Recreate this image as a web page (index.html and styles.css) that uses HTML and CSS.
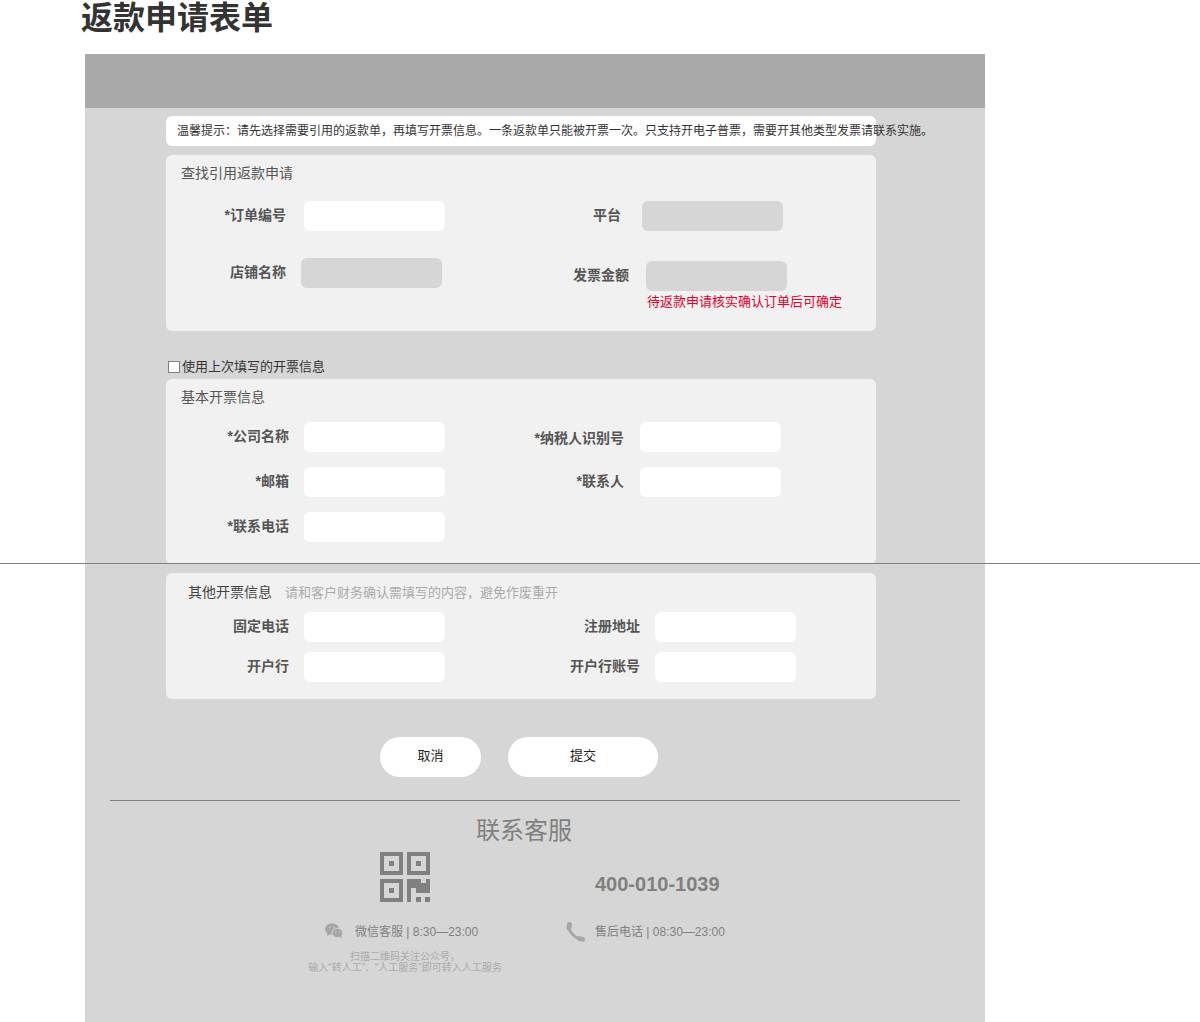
FILE: index.html
```html
<!DOCTYPE html>
<html lang="zh-CN">
<head>
    <meta charset="utf-8">
    <title>返款申请表单</title>
    <link rel="stylesheet" href="styles.css">
</head>
<body>
    <h1 class="page-title">返款申请表单</h1>
    <div class="page-rule"></div>

    <div class="panel">
        <div class="panel-header"></div>

        <div class="panel-body">
            <div class="notice">温馨提示：请先选择需要引用的返款单，再填写开票信息。一条返款单只能被开票一次。只支持开电子普票，需要开其他类型发票请联系实施。</div>

            <!-- Lookup -->
            <section class="card card-lookup">
                <h3 class="card-title">查找引用返款申请</h3>
                <div class="row row-lookup-a">
                    <div class="field">
                        <label class="label w120">*订单编号</label>
                        <input class="input gap18" type="text">
                    </div>
                    <div class="field">
                        <label class="label w100">平台</label>
                        <input class="input gap21" type="text" disabled>
                    </div>
                </div>
                <div class="row row-lookup-b">
                    <div class="field">
                        <label class="label w120">店铺名称</label>
                        <input class="input gap15" type="text" disabled>
                    </div>
                    <div class="field field-low">
                        <label class="label w108">发票金额</label>
                        <div class="gap17">
                            <input class="input" type="text" disabled>
                            <p class="hint">待返款申请核实确认订单后可确定</p>
                        </div>
                    </div>
                </div>
            </section>

            <label class="reuse"><input class="check" type="checkbox">使用上次填写的开票信息</label>

            <!-- Basic invoice info -->
            <section class="card card-basic">
                <h3 class="card-title">基本开票信息</h3>
                <div class="rows rows-basic">
                    <div class="row">
                        <div class="field">
                            <label class="label w123">*公司名称</label>
                            <input class="input gap15" type="text">
                        </div>
                        <div class="field">
                            <label class="label w103 label-low">*纳税人识别号</label>
                            <input class="input gap16" type="text">
                        </div>
                    </div>
                    <div class="row">
                        <div class="field">
                            <label class="label w123">*邮箱</label>
                            <input class="input gap15" type="text">
                        </div>
                        <div class="field">
                            <label class="label w103">*联系人</label>
                            <input class="input gap16" type="text">
                        </div>
                    </div>
                    <div class="row">
                        <div class="field">
                            <label class="label w123">*联系电话</label>
                            <input class="input gap15" type="text">
                        </div>
                    </div>
                </div>
            </section>

            <!-- Other invoice info -->
            <section class="card card-other">
                <h3 class="card-title card-title-other">其他开票信息<span class="card-tip">请和客户财务确认需填写的内容，避免作废重开</span></h3>
                <div class="rows rows-other">
                    <div class="row">
                        <div class="field">
                            <label class="label w123">固定电话</label>
                            <input class="input gap15" type="text">
                        </div>
                        <div class="field">
                            <label class="label w119">注册地址</label>
                            <input class="input gap15" type="text">
                        </div>
                    </div>
                    <div class="row">
                        <div class="field">
                            <label class="label w123">开户行</label>
                            <input class="input gap15" type="text">
                        </div>
                        <div class="field">
                            <label class="label w119">开户行账号</label>
                            <input class="input gap15" type="text">
                        </div>
                    </div>
                </div>
            </section>
        </div>

        <div class="actions">
            <button class="btn btn-cancel" type="button">取消</button>
            <button class="btn btn-submit" type="button">提交</button>
        </div>

        <div class="contact">
            <h2 class="contact-title">联系客服</h2>
            <div class="contact-cols">
                <div class="contact-wechat">
                    <svg class="qr" viewBox="0 0 50 50" width="50" height="50">
                        <path fill="#808080" fill-rule="evenodd" d="M0 0h23v23H0zM4 4v15h15V4zM9 9h5v5H9zM27 0h23v23H27zM31 4v15h15V4zM36 9h5v5h-5zM0 27h23v23H0zM4 31v15h15V31zM9 36h5v5H9z"/>
                        <path fill="#808080" d="M27 27h14v4h5v-4h4v14H36v-5h-5v14h-4zM36 45h5v5h-5zM45 45h5v5h-5z"/>
                    </svg>
                    <div class="contact-line wechat-line">
                        <svg class="icon-wechat" viewBox="0 0 18 16" width="18" height="16">
                            <ellipse cx="7" cy="6" rx="7" ry="5.800" fill="#a6a6a6"/>
                            <path d="M2.500 9.500L2 13l3.500-2z" fill="#a6a6a6"/>
                            <ellipse cx="12.500" cy="10" rx="5.500" ry="4.700" fill="#a6a6a6" stroke="#d6d6d6"/>
                            <path d="M15 13.500l1.500 2.500-.2-3.500z" fill="#a6a6a6"/>
                            <circle cx="4.800" cy="4.500" r="1" fill="#c4c4c4"/>
                            <circle cx="9" cy="4.500" r="1" fill="#c4c4c4"/>
                            <circle cx="10.500" cy="9" r=".8" fill="#c4c4c4"/>
                            <circle cx="14.500" cy="9" r=".8" fill="#c4c4c4"/>
                        </svg>
                        <span>微信客服 | 8:30—23:00</span>
                    </div>
                    <p class="contact-small">扫描二维码关注公众号，<br>输入“转人工”、“人工服务”即可转入人工服务</p>
                </div>
                <div class="contact-phone">
                    <div class="phone-number">400-010-1039</div>
                    <div class="contact-line phone-line">
                        <svg class="icon-phone" viewBox="0 0 20 20" width="20" height="20" fill="none" stroke="#a6a6a6" stroke-linecap="round">
                            <path d="M3.500 2.500L3 6" stroke-width="5"/>
                            <path d="M3 6C4 11 9 15.500 13 16.500" stroke-width="3"/>
                            <path d="M13 16.500L17 17.500" stroke-width="4.500"/>
                        </svg>
                        <span>售后电话 | 08:30—23:00</span>
                    </div>
                </div>
            </div>
        </div>
    </div>
</body>
</html>
```

FILE: styles.css
```css
* {
    box-sizing: border-box;
}

html, body {
    height: 1022px;
    overflow: hidden;
}

body {
    position: relative;
    margin: 0;
    background-color: #ffffff;
    font-family: "Liberation Sans", "Noto Sans CJK SC", sans-serif;
    color: #333333;
}

.page-title {
    height: 54px;
    margin: 0;
    padding-left: 81px;
    font-size: 32px;
    line-height: 37px;
    font-weight: bold;
    color: #333333;
}

/* stray rule that crosses the whole page */
.page-rule {
    position: absolute;
    top: 563px;
    left: 0;
    right: 0;
    height: 1px;
    background-color: #808080;
}

.panel {
    width: 900px;
    height: 968px;
    margin-left: 85px;
    background-color: #d6d6d6;
}

.panel-header {
    height: 54px;
    background-color: #a9a9a9;
}

.panel-body {
    width: 710px;
    margin-left: 81px;
    padding-top: 8px;
}

.notice {
    height: 30px;
    padding-left: 11px;
    border-radius: 6px;
    background-color: #ffffff;
    font-size: 12px;
    line-height: 30px;
    white-space: nowrap;
    color: #333333;
}

.card {
    border-radius: 6px;
    background-color: #f1f1f1;
}

.card-lookup {
    height: 176px;
    margin-top: 9px;
    padding-top: 8px;
}

.card-basic {
    height: 185px;
    margin-top: 4px;
    padding-top: 8px;
}

.card-other {
    height: 126px;
    margin-top: 9px;
    padding-top: 9px;
}

.card-title {
    margin: 0;
    padding-left: 15px;
    font-size: 14px;
    line-height: 20px;
    font-weight: normal;
    color: #555555;
}

.card-title-other {
    padding-left: 22px;
    color: #444444;
}

.card-tip {
    margin-left: 13px;
    font-size: 13px;
    color: #aaaaaa;
}

.row {
    display: flex;
    align-items: flex-start;
}

.rows {
    display: flex;
    flex-direction: column;
}

.rows-basic {
    margin-top: 15px;
    gap: 15px;
}

.rows-other {
    margin-top: 9px;
    gap: 10px;
}

.row-lookup-a {
    margin-top: 18px;
}

.row-lookup-b {
    margin-top: 27px;
}

.field {
    display: flex;
    align-items: flex-start;
    width: 355px;
}

.field-low {
    margin-top: 3px;
}

.label {
    flex: none;
    text-align: right;
    font-size: 14px;
    line-height: 28px;
    font-weight: bold;
    color: #555555;
}

.label-low {
    margin-top: 2px;
}

.w100 { width: 100px; }
.w103 { width: 103px; }
.w108 { width: 108px; }
.w119 { width: 119px; }
.w120 { width: 120px; }
.w123 { width: 123px; }

.gap15 { margin-left: 15px; }
.gap16 { margin-left: 16px; }
.gap17 { margin-left: 17px; }
.gap18 { margin-left: 18px; }
.gap21 { margin-left: 21px; }

.input {
    display: block;
    width: 141px;
    height: 30px;
    padding: 0 8px;
    border: none;
    border-radius: 6px;
    background-color: #ffffff;
}

.input:disabled {
    background-color: #d6d6d6;
}

.hint {
    margin: 1px 0 0 1px;
    font-size: 13px;
    line-height: 19px;
    white-space: nowrap;
    color: #e6002d;
}

.reuse {
    display: flex;
    align-items: center;
    height: 20px;
    margin-top: 24px;
    padding-left: 2px;
    font-size: 13px;
    color: #333333;
}

.check {
    appearance: none;
    width: 12px;
    height: 12px;
    margin: 4px 2px 0 0;
    border: 1px solid #808080;
    background-color: #ffffff;
}

.actions {
    display: flex;
    gap: 27px;
    margin-top: 38px;
    padding-left: 295px;
}

.btn {
    height: 40px;
    padding: 0 0 6px;
    border: none;
    border-radius: 20px;
    background-color: #ffffff;
    font-family: inherit;
    font-size: 13px;
    color: #222222;
}

.btn-cancel {
    width: 101px;
}

.btn-submit {
    width: 150px;
}

.contact {
    margin: 23px 25px 0;
    border-top: 1px solid #808080;
}

.contact-title {
    width: 828px;
    margin: 13px 0 0;
    text-align: center;
    font-size: 24px;
    line-height: 34px;
    font-weight: normal;
    color: #808080;
}

.contact-cols {
    display: flex;
    margin-top: 4px;
}

.contact-wechat {
    width: 210px;
    margin-left: 190px;
    text-align: center;
}

.qr {
    display: block;
    margin: 0 auto;
}

.contact-line {
    display: flex;
    align-items: center;
    font-size: 12px;
    color: #808080;
}

.wechat-line {
    margin-top: 19px;
    padding-left: 25px;
    height: 18px;
}

.icon-wechat {
    margin: 2px 12px 0 0;
}

.contact-small {
    margin: 12px 0 0;
    font-size: 10px;
    line-height: 11px;
    color: #aaaaaa;
}

.contact-phone {
    margin-left: 56px;
}

.phone-number {
    margin: 20px 0 0 29px;
    font-size: 20px;
    line-height: 24px;
    font-weight: bold;
    color: #808080;
}

.phone-line {
    margin-top: 22px;
}

.icon-phone {
    margin: 4px 9px 0 0;
}
```
